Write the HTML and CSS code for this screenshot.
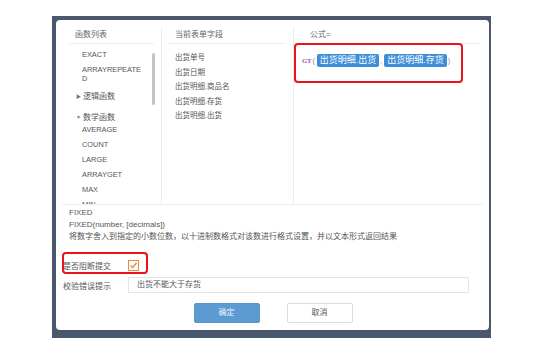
FILE: index.html
```html
<!DOCTYPE html>
<html lang="zh-CN">
<head>
<meta charset="utf-8">
<title>公式编辑</title>
<link rel="stylesheet" href="styles.css">
</head>
<body>
<div class="frame">
  <div class="dialog">
    <div class="columns">
      <div class="col col-func">
        <div class="col-head">函数列表</div>
        <div class="func-list">
          <div class="item">EXACT</div>
          <div class="item">ARRAYREPEATED</div>
          <div class="group collapsed"><span class="caret">▶</span>逻辑函数</div>
          <div class="group"><span class="caret">▼</span>数学函数</div>
          <div class="item">AVERAGE</div>
          <div class="item">COUNT</div>
          <div class="item">LARGE</div>
          <div class="item">ARRAYGET</div>
          <div class="item">MAX</div>
          <div class="item">MIN</div>
        </div>
        <div class="thumb"></div>
      </div>
      <div class="col col-field">
        <div class="col-head">当前表单字段</div>
        <div class="field-list">
          <div class="field">出货单号</div>
          <div class="field">出货日期</div>
          <div class="field">出货明细.商品名</div>
          <div class="field">出货明细.存货</div>
          <div class="field">出货明细.出货</div>
        </div>
      </div>
      <div class="col col-formula">
        <div class="col-head">公式=</div>
        <div class="formula">
          <span class="fn">GT</span><span class="punc">(</span><span class="tag">出货明细.出货</span><span class="punc">,</span><span class="tag">出货明细.存货</span><span class="punc">)</span>
        </div>
      </div>
    </div>
    <div class="doc">
      <div>FIXED</div>
      <div>FIXED(number, [decimals])</div>
      <div>将数字舍入到指定的小数位数，以十进制数格式对该数进行格式设置，并以文本形式返回结果</div>
    </div>
    <div class="row row-check">
      <span class="label">是否阻断提交</span>
      <svg class="check" width="11" height="11" viewBox="0 0 11 11"><rect x="0.5" y="0.5" width="10" height="10" fill="#fff" stroke="#f0893b"/><path d="M2.5 5.6 L4.6 7.8 L8.6 2.8" fill="none" stroke="#f0893b" stroke-width="1.4"/></svg>
    </div>
    <div class="row row-input">
      <span class="label">校验错误提示</span>
      <div class="input">出货不能大于存货</div>
    </div>
    <div class="buttons">
      <div class="btn btn-ok">确定</div>
      <div class="btn btn-cancel">取消</div>
    </div>
    <div class="mark mark-formula"></div>
    <div class="mark mark-check"></div>
  </div>
</div>
</body>
</html>
```
FILE: styles.css
```css
* { box-sizing: border-box; }
html, body { margin: 0; padding: 0; background: #fff; }
body {
  font-family: "Liberation Sans", "Noto Sans CJK SC", sans-serif;
  font-size: 8px;
  color: #555;
}
.frame {
  margin: 16px 0 0 52px;
  width: 439px;
  height: 322px;
  background: #4a576c;
  padding: 4px 2px 8px 4px;
}
.dialog {
  position: relative;
  width: 433px;
  height: 310px;
  background: #fff;
  border-radius: 4px;
  padding-top: 7px;
  display: flex;
  flex-direction: column;
}
.columns {
  display: flex;
  margin: 0 6px;
  height: 178px;
  border-bottom: 1px solid #eee;
}
.col { height: 177px; }
.col-head {
  height: 17px;
  line-height: 16px;
  border-bottom: 1px solid #eee;
  color: #666;
}
.col-func {
  position: relative;
  width: 99px;
  padding: 0 7px;
}
.col-func .col-head { padding-left: 6px; }
.func-list {
  height: 160px;
  overflow: hidden;
  padding-top: 3px;
}
.item {
  padding: 3px 0 3px 13px;
  width: 75px;
  line-height: 9px;
  font-size: 7.4px;
  word-break: break-all;
}
.group {
  padding: 6px 0 0 7px;
  line-height: 9px;
}
.group.collapsed { padding-bottom: 6px; }
.caret {
  display: inline-block;
  width: 7px;
  font-size: 5px;
  color: #777;
  vertical-align: 1px;
}
.thumb {
  position: absolute;
  left: 90px;
  top: 26px;
  width: 3px;
  height: 52px;
  background: #c4c4c4;
  border-radius: 2px;
}
.col-field {
  width: 132px;
  border-left: 1px solid #eee;
  padding: 0 8px 0 6px;
}
.col-field .col-head { padding-left: 7px; }
.field-list { padding: 7px 0 0 7px; }
.field { line-height: 14.5px; font-size: 7.5px; }
.col-formula {
  flex: 1;
  border-left: 1px solid #eee;
  padding: 0 2px 0 3px;
}
.col-formula .col-head { padding-left: 13px; }
.formula {
  display: flex;
  align-items: center;
  margin-top: 10px;
  padding-left: 5px;
  height: 13px;
}
.fn {
  font-family: "Liberation Serif", serif;
  font-weight: bold;
  font-size: 6.5px;
  color: #9b4fb8;
}
.punc {
  color: #888;
  font-size: 7px;
  padding: 0 2px 0 1px;
}
.tag {
  background: #3c8ed8;
  color: #fff;
  font-size: 9px;
  line-height: 13px;
  padding: 0 3px;
  border-radius: 2px;
}
.doc {
  padding: 2px 13px 0;
  line-height: 12px;
  height: 38px;
}
.row {
  display: flex;
  align-items: center;
  padding-left: 7px;
}
.label { width: 65px; }
.row-check { margin-top: 15px; height: 14px; }
.check { display: block; }
.row-input { margin-top: 5px; height: 16px; }
.input {
  width: 341px;
  height: 16px;
  border: 1px solid #e4e4e4;
  padding-left: 8px;
  line-height: 14px;
  color: #555;
}
.buttons {
  display: flex;
  justify-content: center;
  gap: 27px;
  margin-top: 10px;
  padding-left: 1px;
}
.btn {
  width: 66px;
  height: 20px;
  line-height: 18px;
  text-align: center;
  border-radius: 2px;
}
.btn-ok {
  background: #5c9bd2;
  border: 1px solid #5a97cd;
  color: #eaf2fa;
}
.btn-cancel {
  background: #fff;
  border: 1px solid #dcdcdc;
  color: #555;
}
.mark {
  position: absolute;
  border: 2px solid #e8131b;
  border-radius: 4px;
}
.mark-formula { left: 238px; top: 23px; width: 169px; height: 40px; }
.mark-check { left: 6px; top: 232px; width: 86px; height: 22px; }
```
